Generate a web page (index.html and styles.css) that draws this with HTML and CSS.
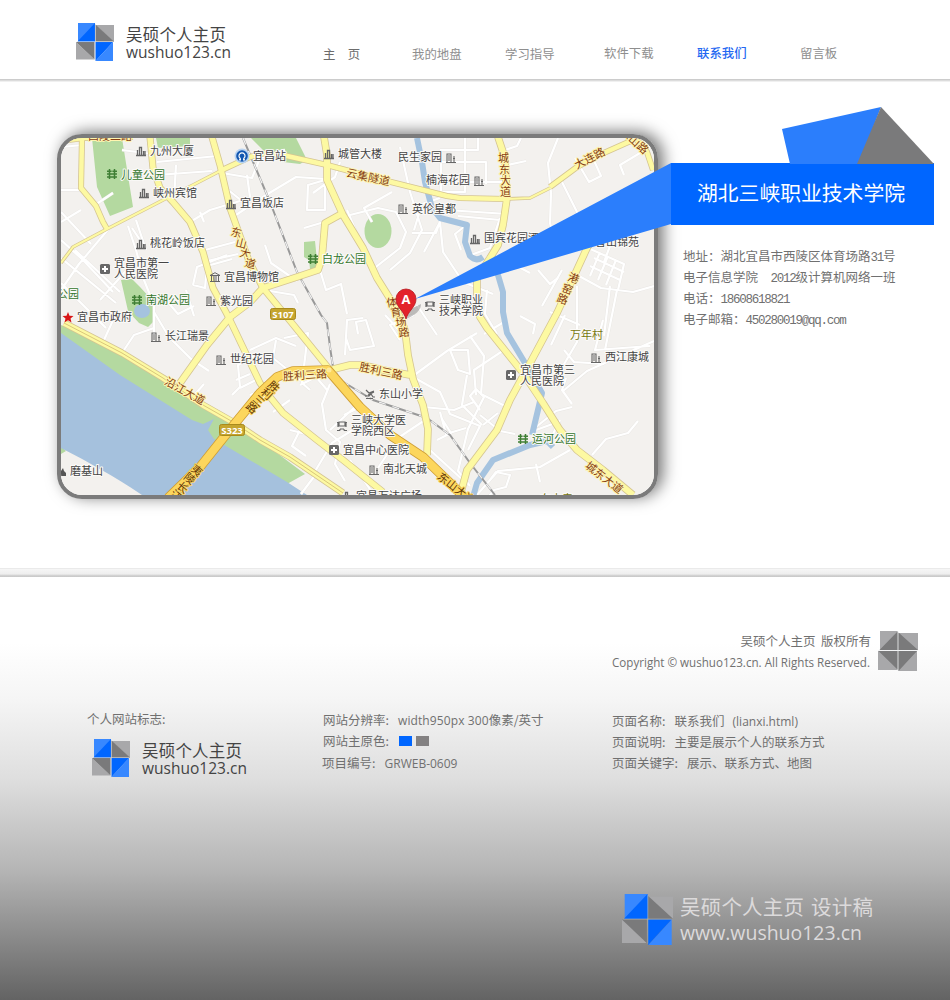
FILE: index.html
```html
<!DOCTYPE html>
<html lang="zh-CN">
<head>
<meta charset="utf-8">
<title>吴硕个人主页 - 联系我们</title>
<link rel="stylesheet" href="styles.css">
</head>
<body>
<svg class="defs" width="0" height="0" aria-hidden="true">
  <symbol id="mark" viewBox="0 0 38 38">
    <path class="a-light" d="M2 0h17v18H2z"/><path class="a-dark" d="M19 0v18.500H1.500z"/>
    <path class="b-light" d="M19.500 2H38v17z"/><path class="b-dark" d="M19.500 1.500L38 18.500H19.500z"/>
    <path class="b-light" d="M0 19v17.500h18.500z"/><path class="b-dark" d="M0 19h18.500v17.500z"/>
    <path class="a-light" d="M37 19v19H19.500z"/><path class="a-dark" d="M19.500 19H37L19.500 38z"/>
    <path class="seam" d="M19.200 1v36M1 18.700h36"/>
  </symbol>
  <symbol id="mark-mono" viewBox="0 0 40 40">
    <path class="b-light" d="M2 0h17.500v19H2zM20.500 2H40v17H20.500zM0 20h19.500v19H0zM20.500 20H39v20H20.500z"/>
    <path class="b-dark" d="M19.500 .5V19H1.500zM20.500 1.500L40 19H20.500zM.5 20h19v18.500zM20.500 20H39L20.500 40z"/>
    <path class="seam" d="M20 0v40M0 19.500h40"/>
  </symbol>
  <defs>
    <g id="tower"><path d="M0 9.500h10M1.500 9V4M3.500 9V1.500h2V9M7.500 9V5M9 9V5" fill="none" stroke="#666" stroke-width="1.300"/></g>
    <g id="hall"><path d="M0 9.500h10M1 9V1h4v8M2 3h2M2 5h2M2 7h2M8 9V5M7 5.500h2M8 3v2" fill="none" stroke="#666" stroke-width="1.100"/></g>
    <g id="park"><path d="M2.500 0v10M7.500 0v10M0 2.200h4.600M5.400 2.200H10M0 5h10M0 8h10" fill="none" stroke="#3f7f34" stroke-width="1.500"/></g>
    <g id="cross"><rect width="10" height="10" rx="1.500" fill="#686868"/><path d="M5 2v6M2 5h6" stroke="#fff" stroke-width="2"/></g>
    <g id="school"><path d="M2 1h6v4H2zM0 1.500h2M8 1.500h2M1 1v5M9 1v5M3 8h4M0 9.500h3M7 9.500h3M3 8v1.500M7 8v1.500" fill="none" stroke="#666" stroke-width="1.200"/></g>
    <g id="museum"><path d="M0 3.500L5 .7l5 2.800zM0 9.500h10M1.500 4v5M4 4v5M6 4v5M8.500 4v5" fill="none" stroke="#666"/></g>
    <g id="pupil"><path d="M1 1l3 3 5-2M3 6l6-3M0 7h4l2-2 2 3h2M1 9.500h7" fill="none" stroke="#666" stroke-width="1.200"/></g>
  </defs>
</svg>

<header class="header">
  <a class="brand">
    <svg class="mark" width="38" height="38"><use href="#mark"/></svg>
    <svg class="wordmark" width="110" height="40">
      <text x="0" y="18" font-size="16.500" textLength="100">吴硕个人主页</text>
      <text x="0" y="35" font-size="16.500" textLength="105" lengthAdjust="spacingAndGlyphs">wushuo123.cn</text>
    </svg>
  </a>
  <nav class="nav">
    <a class="nav-item home">主　页</a>
    <a class="nav-item">我的地盘</a>
    <a class="nav-item">学习指导</a>
    <a class="nav-item raised">软件下载</a>
    <a class="nav-item raised active">联系我们</a>
    <a class="nav-item raised">留言板</a>
  </nav>
</header>

<main class="main">
  <div class="map-frame">
    <svg class="map" width="593" height="357" viewBox="61 138 593 357">
      <defs>
        <g id="minor">
          <path d="M61 190h20M61 147l22-2M61 222l20-12M61 290l18-26 32-38M61 212l30 32M61 240l22 20 30 32M61 258l55 45M61 283l45 45M100 300l32-36M75 250l45 42M128 226l8 24 8 30 10 25v30M95 205l18-12M157 162l60-6M157 175l55-4M176 165l-2 34M122 150l30 4M190 222l20-12 40-12M200 212l4 10M222 173l30 5 8-20 25-8M132 228l10 15M136 220l10 30M205 250l30-8M203 262l35-8"/>
          <path d="M193 285l4-18 30-12M193 285l12 3 2-22 25-7M222 185l25 20M236 215l30-20 30-18 30 2M154 312l15 25 22 22 18 12M104 340l10-22M122 353l12-18 20-7M166 300l12 14 16-8M186 290l8 26M250 197l-3-22M340 162l-5 15-22 16M308 185l17-5v30h-18zM304 228l34-10 40-10 18 4 10 20-6 16-28 22-25-60M372 222l-8-14 28-16M390 270l20-17 12-23-12-38-10-45M412 233h24l4-12M414 230l8-26 18-6M424 252l16-30 3 30 20 30 30 12"/>
          <path d="M320 270l6 20 15-6 6 30M264 290l30 5 4 8M265 245l6 18 26 18M250 350l26-12 20 8M276 340l-3 18 30 24M284 338l24-5-6 50 8 7M300 385l16-8 12 14M346 338l4 12 24-4-8-26-10 2 2 12M345 355l2-35 16-2M330 384l-8 20 4 26 14 12-5 22 10 17M385 315l14 15M400 340l-10-15 24-10M417 305l20 30M413 376l34-25 30-18M413 377l27 15 10 22 30 12-12 24M424 407l30 3 20-8M440 412l6 22 20-6M437 440l14-7-9-14M430 450l35 32M378 468l20-30 30-20M350 460l24 35M314 473l18-30 38-24M300 430l-8 16 14 10M290 400l-17 12"/>
          <path d="M558 138l-10 25 3 30-1 30 6 25M575 158l14 24 12-6-10-22M560 178l20 40 4 20M624 175l-4-10 30-18M465 138v54h-24v-30h32M440 150h38v-12M440 162h46v22M455 182h50M505 150l12-4 4-8M508 165l18-4M500 220l-42-4M507 214l-60-4M496 255l34 18M468 256l22-8 10-30M461 250l-6-16 10-8M538 270l12 14 8-6M579 276l22 12 32 4 21-6M610 286l-6 50M588 248l36 16-6 26M600 252l-10 24M608 256l-10 24M616 260l-10 25M594 258l30 14M590 266l30 14M604 262l6-16M487 290l-2 24 12 20M484 334l20-12M470 336l14 20-3 38 24 12M450 350h18l2 24-12-4zM467 375l-5 30 20 20"/>
          <path d="M480 410l-10-14 6-7 8 8-16 32-10 42 12 15M480 415l20 16 15 3M483 425l15-12M577 286v56l-14 24M565 315l-14 30M520 316l15 8-2 10M564 350l10 12 30 2M603 320l-8 30 55-4M617 290l-12 60M563 391l24-20 40-18 27-12M566 378l-4 12 10 14M536 427l20-16 16-4M536 430l22-8M552 436l8-16M592 455l14-16 22-6 10-12M570 450l-30 17-42 4-22 25M536 464l4 18M504 350l-30 20 2 25M490 480l6-8 14 3-4 12-12 3-8 10"/>
          <path d="M232 395l8-8-2-22 18-10M236 380l14-6M240 388l18-9M250 395l20-8M190 400l14-16M290 430l20 5M300 468l16 6-15 20M344 415l20-10M330 430l28-26M550 312l30 13M562 270l-20 36"/>
        </g>
        <g id="major">
          <path class="w5" d="M61 141l22-3 50-1M82 138l-1 50 15 18 7 16 4 7"/>
          <path class="w2" d="M61 263l12-16 34-18 60-31 26-13 29-15"/>
          <path class="w5" d="M222 170l28-13 15-4 22 3 40 9 56 15 64 16 13 2 45 1"/>
          <path class="w2" d="M505 199l25-1 20-10"/>
          <path class="w5" d="M550 187l27-20 20-11 36-16M637 140l10 12 6 18"/>
          <path class="w6" d="M150 137l3 31 7 20 13 14 17 20 13 30 10 36 15 28 32 67 10 14 13 16 34 27 26 20 40 32M212 137l8 28 10 43 19 53 14 27 24 29 43 53"/>
          <path class="w7" d="M324 137l3 18v25l16 35 20 33 14 30 20 32 8 20 3 25 5 24 10 26 5 24-1 26M343 213l-18 10-3 35-4 12-21 7-34 11-13 14-20 15-23 28-27 38M330 370l20-5 13 0 20 5 27 5"/>
          <path class="w6" d="M64 323l29 15 29 15 41 25 40 27 30 17 27 18 30 17 53 36"/>
          <path class="w7" d="M498 137l7 21 2 40-4 27-5 20-8 13-13 20v17l3 22 7 11 36 45 20 30 17 27 17 20 26 20 30 25M602 222l-15 26-30 65-29 54-18 33-13 30-30 40-6 22"/>
        </g>
        <g id="trunk"><path class="w8" d="M168 498l32-31 32-40 28-34 17-16 16-6 35-1 32 37 30 28 33 22 27 26 14 14"/></g>
      </defs>
      <rect x="61" y="138" width="593" height="357" fill="#f3f1ee"/>
      <g fill="#b4d9a0">
        <path d="M92 138h30l11 69-23 9-13-29zM156 138h34v8l-32 2zM251 138h45l11 22-7 4-17-2-18-10zM304 242l11-1 3 29-8-1-1-9-5-3zM121 280l11-1 8 8 12 13 3 20-7 7-9-4-11-12z"/>
        <ellipse cx="378" cy="231" rx="13.500" ry="17"/>
        <path d="M61 325l69 33 35 22 60 34 80 60-18 10-80-30-97-54-49-60zM61 446l5 5-5 3z"/>
      </g>
      <ellipse cx="142" cy="311" rx="8" ry="7" fill="#a5c3df"/>
      <path d="M61 333l59 42 40 25 32 20 11 4 11-5-6 11 6 9 46 27 27 16 20 13H142c-30-20-52-32-81-47z" fill="#a5c1dd"/>
      <use class="minor-edge" href="#minor"/><use class="minor-fill" href="#minor"/>
      <path class="canal" d="M417 138l5 24 3 20 7 26 8 10 27 7-2 17 5 14q6 6 13 1M490 256l8 19 5 17v20l4 21 18 30 17 30-10 42M553 447l-6-6-17 4-37 15-16 23-4 14"/>
      <path class="rail" d="M243 138l27 64 27 70 24 43 6 8 3 24 3 20 7 13 33 20 54 18 23 17 20 28 25 32"/>
      <path class="rail-dash" d="M243 138l27 64 27 70 24 43 6 8 3 24 3 20 7 13 33 20 54 18 23 17 20 28 25 32"/>
      <use class="major-edge" href="#major"/><use class="major-fill" href="#major"/>
      <path d="M64 323l29 15 29 15 41 25 40 27 30 17 27 18 30 17 53 36" fill="none" stroke="#dac77a"/>
      <use class="trunk-edge" href="#trunk"/><use class="trunk-fill" href="#trunk"/>
      <circle cx="329" cy="370" r="2.500" fill="#ffe99a"/>

      <g class="poi">
        <use href="#tower" x="136" y="146"/><text x="150" y="155">九州大厦</text>
        <use href="#tower" x="139" y="188"/><text x="153" y="197">峡州宾馆</text>
        <use href="#tower" x="226" y="199"/><text x="240" y="207">宜昌饭店</text>
        <use href="#tower" x="136" y="239"/><text x="150" y="247">桃花岭饭店</text>
        <use href="#cross" x="100" y="264"/><text x="114" y="267">宜昌市第一</text><text x="114" y="278">人民医院</text>
        <use href="#museum" x="210" y="272"/><text x="224" y="281">宜昌博物馆</text>
        <use href="#hall" x="206" y="296"/><text x="220" y="305">紫光园</text>
        <text x="253" y="160">宜昌站</text>
        <text x="77" y="321">宜昌市政府</text>
        <use href="#hall" x="151" y="332"/><text x="165" y="340">长江瑞景</text>
        <use href="#hall" x="216" y="355"/><text x="230" y="363">世纪花园</text>
        <use href="#tower" x="324" y="149"/><text x="338" y="158">城管大楼</text>
        <text x="398" y="161">民生家园</text><use href="#hall" x="446" y="153"/>
        <text x="426" y="184">楠海花园</text><use href="#hall" x="474" y="176"/>
        <use href="#hall" x="398" y="204"/><text x="412" y="213">英伦皇都</text>
        <use href="#tower" x="470" y="234"/><text x="484" y="242">国宾花园酒店</text>
        <text x="595" y="246">香山锦苑</text>
        <use href="#school" x="425" y="301"/><text x="439" y="304">三峡职业</text><text x="439" y="315">技术学院</text>
        <use href="#hall" x="591" y="353"/><text x="605" y="361">西江康城</text>
        <use href="#cross" x="506" y="370"/><text x="520" y="374">宜昌市第三</text><text x="520" y="385">人民医院</text>
        <use href="#pupil" x="365" y="389"/><text x="379" y="398">东山小学</text>
        <use href="#school" x="337" y="421"/><text x="351" y="424">三峡大学医</text><text x="351" y="435">学院西区</text>
        <use href="#cross" x="329" y="445"/><text x="343" y="454">宜昌中心医院</text>
        <use href="#hall" x="369" y="465"/><text x="383" y="473">南北天城</text>
        <use href="#tower" x="342" y="491"/><text x="356" y="500">宜昌万达广场</text>
        <text x="70" y="475">磨基山</text><path d="M61 476v-5l2-3 1 3 2 2v3z" fill="#555"/>
      </g>
      <g class="poi green">
        <use href="#park" x="107" y="169"/><text x="121" y="179">儿童公园</text>
        <use href="#park" x="308" y="254"/><text x="322" y="263">白龙公园</text>
        <use href="#park" x="132" y="295"/><text x="146" y="304">南湖公园</text>
        <use href="#park" x="518" y="434"/><text x="532" y="443">运河公园</text>
        <text x="57" y="298">公园</text>
      </g>
      <g class="poi village"><text x="570" y="339">万年村</text><text x="540" y="503">东山寺</text></g>
      <g class="street">
        <text x="88" y="140">西陵二路</text>
        <text x="230 235 239 244" y="235 246 256 266" rotate="14">东山大道</text>
        <text transform="rotate(12 368 178)" x="346" y="181">云集隧道</text>
        <text transform="rotate(-27 590 158)" x="573" y="162">大连路</text>
        <text transform="rotate(42 635 141)" x="618" y="145">东山路</text>
        <text x="498 499 500 500" y="162 174 185 196">城东大道</text>
        <text x="567 561 556" y="280 291 301" rotate="20">港窑路</text>
        <text x="387 391 396 399" y="307 317 327 337" rotate="-8">体育场路</text>
        <text transform="rotate(29 185 391)" x="163" y="395">沿江大道</text>
        <text transform="rotate(-4 305 375)" x="283" y="379">胜利三路</text>
        <text transform="rotate(12 381 371)" x="359" y="375">胜利三路</text>
        <text transform="rotate(38 605 478)" x="582" y="482">城东大道</text>
      </g>
      <g class="street on-trunk">
        <text x="267 260 252 245" y="386 393 400 407" rotate="42">胜利三路</text>
        <text x="190 183 176 169" y="470 478 487 495" rotate="40">夷陵长江</text>
        <text transform="rotate(38 443 478)" x="438" y="482">东山大道</text>
      </g>
      <g class="route">
        <rect x="270.500" y="308.500" width="25" height="11" rx="2"/><text x="283" y="318">S107</text>
        <rect x="219.500" y="424.500" width="25" height="11" rx="2"/><text x="232" y="434">S323</text>
      </g>
      <path d="M68 312l1.500 3.700 4 .3-3 2.500 1 4-3.500-2.200-3.500 2.200 1-4-3-2.500 4-.3z" fill="#d81515"/>
      <circle cx="242" cy="156" r="7.500" fill="#b9d4f2"/><circle cx="242" cy="156" r="5.800" fill="#1257b0"/>
      <path d="M240.200 159.500v-1.200a3 3 0 1 1 3.600 0v1.200M239 159.800h2M243 159.800h2" fill="none" stroke="#fff" stroke-width="1.200"/>
      <path d="M406 319l5-10 10-5q0 9-15 15z" fill="#555" opacity=".35"/>
      <path d="M406 319c-2-8-10-12-10-20a10 10 0 0 1 20 0c0 8-8 12-10 20z" fill="#e3222b" stroke="#b5161c" stroke-width=".8"/>
      <text class="pin-letter" x="406" y="303.500">A</text>
    </svg>
  </div>

  <section class="contact">
    <h1 class="school-name">湖北三峡职业技术学院</h1>
    <div class="details">
      <p>地址：湖北宜昌市西陵区体育场路<span class="mono">31</span>号</p>
      <p>电子信息学院　<span class="mono">2012</span>级计算机网络一班</p>
      <p>电话：<span class="mono">18608618821</span></p>
      <p>电子邮箱：<span class="mono">450280019@qq.com</span></p>
    </div>
  </section>

  <svg class="ribbon" width="530" height="200" viewBox="410 104 530 200">
    <path fill="#2b7efc" d="M671 163v61L415 299zM782 129l99-22-22 57h-69z"/>
    <path fill="#7a7a7b" d="M881 107l53 57h-77z"/>
  </svg>
</main>

<footer class="footer">
  <div class="copyright">
    <div class="copyright-text">
      <p>吴硕个人主页&nbsp; 版权所有</p>
      <svg width="259" height="21"><text x="0" y="16" font-size="12" textLength="258" lengthAdjust="spacingAndGlyphs">Copyright © wushuo123.cn. All Rights Reserved.</text></svg>
    </div>
    <svg class="mark" width="40" height="40"><use href="#mark-mono"/></svg>
  </div>
  <div class="info">
    <div class="info-logo">
      <p>个人网站标志<span class="colon">:</span></p>
      <div class="brand">
        <svg class="mark" width="38" height="38"><use href="#mark"/></svg>
        <svg class="wordmark" width="110" height="40">
          <text x="0" y="18" font-size="16.500" textLength="100">吴硕个人主页</text>
          <text x="0" y="35" font-size="16.500" textLength="105" lengthAdjust="spacingAndGlyphs">wushuo123.cn</text>
        </svg>
      </div>
    </div>
    <div class="info-site">
      <p>网站分辨率<span class="colon">:</span><span class="latin wide">width950px 300</span>像素/英寸</p>
      <p>网站主原色<span class="colon">:</span><i class="swatch blue"></i><i class="swatch gray"></i></p>
      <p class="project">项目编号<span class="colon">:</span><span class="latin">GRWEB-0609</span></p>
    </div>
    <div class="info-page">
      <p>页面名称<span class="colon">:</span>联系我们<span class="latin file">(lianxi.html)</span></p>
      <p>页面说明<span class="colon">:</span>主要是展示个人的联系方式</p>
      <p>页面关键字<span class="colon">:</span>展示、联系方式、地图</p>
    </div>
  </div>
  <div class="brand draft">
    <svg class="mark" width="51" height="51"><use href="#mark"/></svg>
    <svg class="wordmark" width="200" height="52">
      <text x="0" y="21" font-size="20.500" textLength="124">吴硕个人主页</text>
      <text x="131" y="21" font-size="20.500" textLength="62">设计稿</text>
      <text x="0" y="46" font-size="20.500" textLength="182" lengthAdjust="spacingAndGlyphs">www.wushuo123.cn</text>
    </svg>
  </div>
</footer>
</body>
</html>
```

FILE: styles.css
```css
* { box-sizing: border-box; }
body {
  margin: 0;
  width: 950px;
  height: 1000px;
  overflow: hidden;
  background: #fff;
  color: #707070;
  font: 12.5px/21px "Noto Sans CJK SC", sans-serif;
}
p, h1 { margin: 0; font-weight: 400; white-space: nowrap; }
p { height: 21px; }
.defs { display: block; height: 0; }

/* Logo */
.a-light { fill: #3888ff; }
.a-dark { fill: #0066ff; }
.b-light { fill: #a8a8aa; }
.b-dark { fill: #7a7a7b; }
.seam { fill: none; stroke: #cfd3d8; stroke-width: .7; stroke-opacity: .3; }
.brand { display: flex; gap: 12px; }
.mark, .wordmark { display: block; flex: none; }
.wordmark { fill: #444; font-family: "Open Sans", "Noto Sans CJK SC", sans-serif; overflow: visible; }

/* Header */
.header {
  display: flex;
  height: 82px;
  padding: 23px 0 0 76px;
  background: linear-gradient(#ccc 0 1px, #dcdcdc 1px 2px, #f0f0f0 2px) 0 79px / 100% 3px no-repeat;
}
.nav {
  display: grid;
  grid-template-columns: 89px 93px 99px 93px 103px 50px;
  margin-left: 87px;
  padding-top: 21px;
}
.nav-item { color: #8e8e8e; font-size: 12.4px; }
.nav-item.home { color: #6c6c6c; }
.nav-item.raised { margin-top: -1px; }
.nav-item.active { color: #2468f2; font-weight: 500; }

/* Contact */
.main {
  position: relative;
  display: flex;
  align-items: flex-start;
  height: 486px;
  padding: 52px 0 0 57px;
}
.map-frame {
  width: 601px;
  height: 365px;
  border: 4px solid #7b7b7b;
  border-radius: 25px;
  overflow: hidden;
  box-shadow: 5px -2px 16px rgba(0, 0, 0, .55);
}
.map { display: block; }
.contact { position: relative; width: 263px; margin: 29px 0 0 13px; }
.school-name {
  height: 62px;
  padding-right: 3px;
  background: #0066ff;
  color: #fff;
  font-size: 20.8px;
  line-height: 59px;
  text-align: center;
}
.details { padding: 20px 0 0 12px; }
.mono { font: 12.5px/20px "Liberation Mono", monospace; letter-spacing: -1.25px; }
.ribbon { position: absolute; left: 410px; top: 22px; }

/* Map */
.w2 { stroke-width: calc(2px + var(--edge)); }
.w5 { stroke-width: calc(4.500px + var(--edge)); }
.w6 { stroke-width: calc(5.500px + var(--edge)); }
.w7 { stroke-width: calc(6px + var(--edge)); }
.w8 { stroke-width: calc(8px + var(--edge)); }
.major-edge, .major-fill, .trunk-edge, .trunk-fill, .minor-edge, .minor-fill, .canal, .rail, .rail-dash {
  fill: none;
  stroke-linejoin: round;
}
.major-edge { --edge: 1.6px; stroke: #d5c591; }
.major-fill { --edge: 0px; stroke: #fdf9a2; }
.trunk-edge { --edge: 1.6px; stroke: #cf9e35; }
.trunk-fill { --edge: 0px; stroke: #fcd65d; }
.minor-edge { stroke: #e8e6e3; stroke-width: 3px; }
.minor-fill { stroke: #fff; stroke-width: 2.200px; }
.canal { stroke: #a5c3df; stroke-width: 6px; }
.rail { stroke: #999; stroke-width: 2px; }
.rail-dash { stroke: #f2f2f2; stroke-width: 1.200px; stroke-dasharray: 7 7; }
.poi text, .street text {
  font-size: 11px;
  fill: #444;
  stroke: #fbfaf8;
  stroke-width: 2px;
  stroke-linejoin: round;
  paint-order: stroke;
}
.poi.green text { fill: #34762c; }
.poi.village text { fill: #77770f; }
.street text { fill: #863d12; stroke: #fff5b0; }
.street.on-trunk text { fill: #5e3305; stroke: #fbd65e; }
.route rect { fill: #c5a52f; stroke: #a98a1c; }
.route text { fill: #fff; stroke: none; font: bold 9.500px "Open Sans", sans-serif; text-anchor: middle; }
.pin-letter { fill: #fff; font: bold 13px "Open Sans", sans-serif; text-anchor: middle; }

/* Footer */
.footer {
  height: 432px;
  padding-top: 62px;
  background:
    linear-gradient(#eaeaea 0 1px, #f6f6f6 1px, #eee 6px, #c9c9c9 8px, #ccc 9px) 0 0 / 100% 9px no-repeat,
    linear-gradient(#fff 75px, #f5f5f5 132px, #dedede 212px, #b5b5b5 302px, #636363 432px);
}
.copyright { display: flex; justify-content: flex-end; gap: 7px; padding-right: 32px; }
.copyright .mark { margin-top: 1px; }
.copyright-text { width: 259px; height: 42px; text-align: right; }
.copyright-text svg { display: block; fill: #707070; font-family: "Open Sans", sans-serif; }
.info {
  display: grid;
  grid-template-columns: 236px 289px 1fr;
  height: 85px;
  padding: 37px 0 0 87px;
}
.info-logo .brand { margin: 10px 0 0 5px; }
.info-logo p { margin-top: -1px; }
.info-page { padding-top: 1px; }
.project { margin: 1px 0 0 -1px; }
.colon { display: inline-block; width: 12.500px; }
.latin { font: 12px/20px "Open Sans", sans-serif; }
.wide { letter-spacing: .1px; }
.file { margin-left: 8px; }
.swatch { display: inline-block; width: 13px; height: 10px; margin-right: 4px; }
.swatch.blue { background: #0066ff; margin-left: 1px; }
.swatch.gray { background: #838182; }
.draft { gap: 7px; padding: 137px 0 0 622px; }
.draft .wordmark { fill: #dcdadb; }
.draft .seam { stroke: #aaa; }
```
